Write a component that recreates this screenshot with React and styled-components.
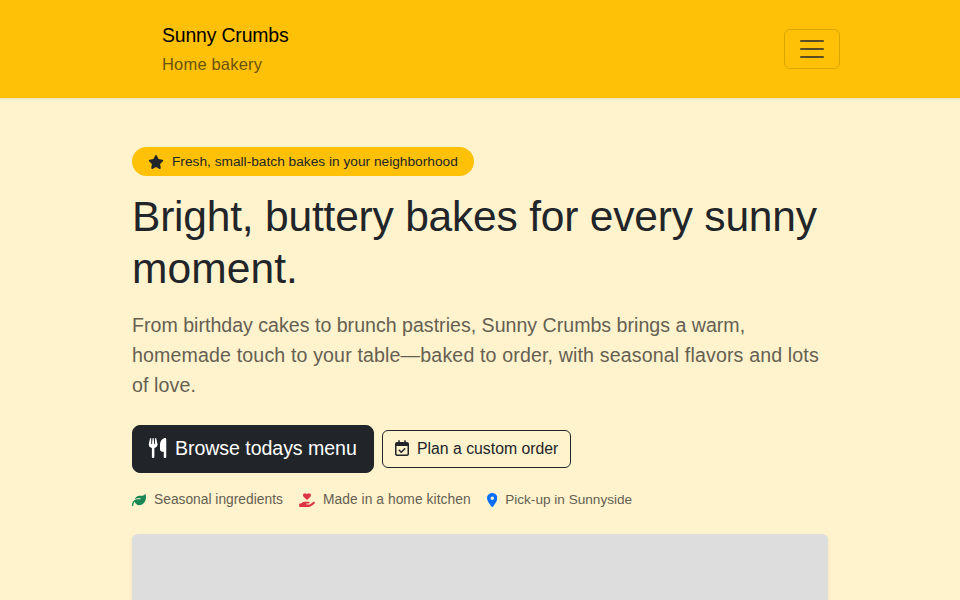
import React from "react";
import styled, { createGlobalStyle } from "styled-components";
import { FaStar, FaUtensils, FaRegCalendarCheck, FaLeaf, FaHandHoldingHeart, FaLocationDot } from "react-icons/fa6";

const Global = createGlobalStyle`
  *, *::before, *::after { box-sizing: border-box; }
  body { margin: 0; background: #fff3cd; color: #212529; font: 400 16px/1.5 "Liberation Sans", Arial, sans-serif; overflow: hidden; }
  h1, p { margin: 0; font-weight: 400; }
`;
const Page = styled.div`height: 600px; overflow: hidden;`;
const Header = styled.header`
  height: 98px; background: #ffc107; display: flex; justify-content: center;
  box-shadow: 0 1px 1px rgba(0,0,0,.05);
`;
const Bar = styled.div`width: 720px; padding: 0 0 0 42px; display: flex; align-items: center; justify-content: space-between;`;
const Brand = styled.div`display: flex; flex-direction: column; padding-top: 1px;`;
const Line = styled.span`
  white-space: nowrap; font-size: ${p => p.$size}px; line-height: ${p => p.$lh}px; color: ${p => p.$color};
  letter-spacing: ${p => p.$ls || 0}px; display: block;
`;
const Toggle = styled.button`
  width: 56px; height: 40px; padding: 0; border: 1px solid rgba(0,0,0,.15); border-radius: 6px; background: transparent;
  display: flex; align-items: center; justify-content: center;
`;
const Main = styled.main`width: 696px; margin: 49px auto 0; display: flex; flex-direction: column; align-items: flex-start;`;
const Badge = styled.div`
  height: 29px; width: 342px; border-radius: 15px; background: #ffc107; display: flex; align-items: center; padding-left: 16px; gap: 8px;
  svg { flex: none; width: 16px; }
`;
const Title = styled.h1`margin-top: 15px;`;
const Lead = styled.p`margin-top: 15px; color: #655f52;`;
const Actions = styled.div`margin-top: 25px; display: flex; align-items: center; gap: 8px;`;
const Button = styled.button`
  display: flex; align-items: center; gap: ${p => p.$dark ? 8 : 7}px; height: ${p => p.$dark ? 48 : 38}px; width: ${p => p.$dark ? 242 : 189}px;
  padding: 0 0 ${p => p.$dark ? 2 : 0}px ${p => p.$dark ? 15 : 11}px; font-family: inherit; border: 1px solid #212529;
  border-radius: ${p => p.$dark ? 8 : 6}px; background: ${p => p.$dark ? "#212529" : "transparent"}; color: ${p => p.$dark ? "#fff" : "#212529"};
  svg { flex: none; width: ${p => p.$dark ? 19 : 16}px; margin-bottom: ${p => p.$dark ? 0 : 2}px; }
`;
const Facts = styled.div`margin-top: 16px; display: flex; gap: 16px; color: #655f52;`;
const Fact = styled.div`
  display: flex; align-items: center; gap: 8px;
  svg { flex: none; color: ${p => p.$color}; width: ${p => p.$icon}px; }
`;
const Picture = styled.div`margin-top: 24px; width: 696px; height: 400px; background: #ddd; border-radius: 6px; box-shadow: 0 2px 4px rgba(0,0,0,.075);`;

export default function App() {
  return (
    <Page>
      <Global />
      <Header>
        <Bar>
          <Brand>
            <Line $size={19.4} $lh={29} $ls={-0.15} $color="#000">Sunny Crumbs</Line>
            <Line $size={16.5} $lh={28} $ls={0.18} $color="#6b520f">Home bakery</Line>
          </Brand>
          <Toggle aria-label="Menu">
            <svg width="30" height="30" viewBox="0 0 30 30"><path stroke="rgba(33,37,41,.75)" strokeLinecap="round" strokeMiterlimit="10" strokeWidth="2" d="M4 7h22M4 15h22M4 23h22" /></svg>
          </Toggle>
        </Bar>
      </Header>
      <Main>
        <Badge><FaStar size={14} /><Line $size={13.7} $lh={21} $ls={0.01}>Fresh, small-batch bakes in your neighborhood</Line></Badge>
        <Title>
          <Line $size={42.5} $lh={52} $ls={-0.2}>Bright, buttery bakes for every sunny</Line>
          <Line $size={42.5} $lh={52} $ls={0.1}>moment.</Line>
        </Title>
        <Lead>
          <Line $size={19.6} $lh={30}>From birthday cakes to brunch pastries, Sunny Crumbs brings a warm,</Line>
          <Line $size={19.6} $lh={30} $ls={0.14}>homemade touch to your table—baked to order, with seasonal flavors and lots</Line>
          <Line $size={19.6} $lh={30} $ls={0.1}>of love.</Line>
        </Lead>
        <Actions>
          <Button $dark><FaUtensils size={20} /><Line $size={19.6} $lh={30} $ls={-0.07}>Browse todays menu</Line></Button>
          <Button><FaRegCalendarCheck size={16} /><Line $size={15.8} $lh={24}>Plan a custom order</Line></Button>
        </Actions>
        <Facts>
          <Fact $icon={14} $color="#198754"><FaLeaf size={14} /><Line $size={13.8} $lh={21}>Seasonal ingredients</Line></Fact>
          <Fact $icon={16} $color="#dc3545"><FaHandHoldingHeart size={14} /><Line $size={13.8} $lh={21} $ls={0.06}>Made in a home kitchen</Line></Fact>
          <Fact $icon={10.5} $color="#0d6efd"><FaLocationDot size={14} /><Line $size={13.6} $lh={21}>Pick-up in Sunnyside</Line></Fact>
        </Facts>
        <Picture />
      </Main>
    </Page>
  );
}
